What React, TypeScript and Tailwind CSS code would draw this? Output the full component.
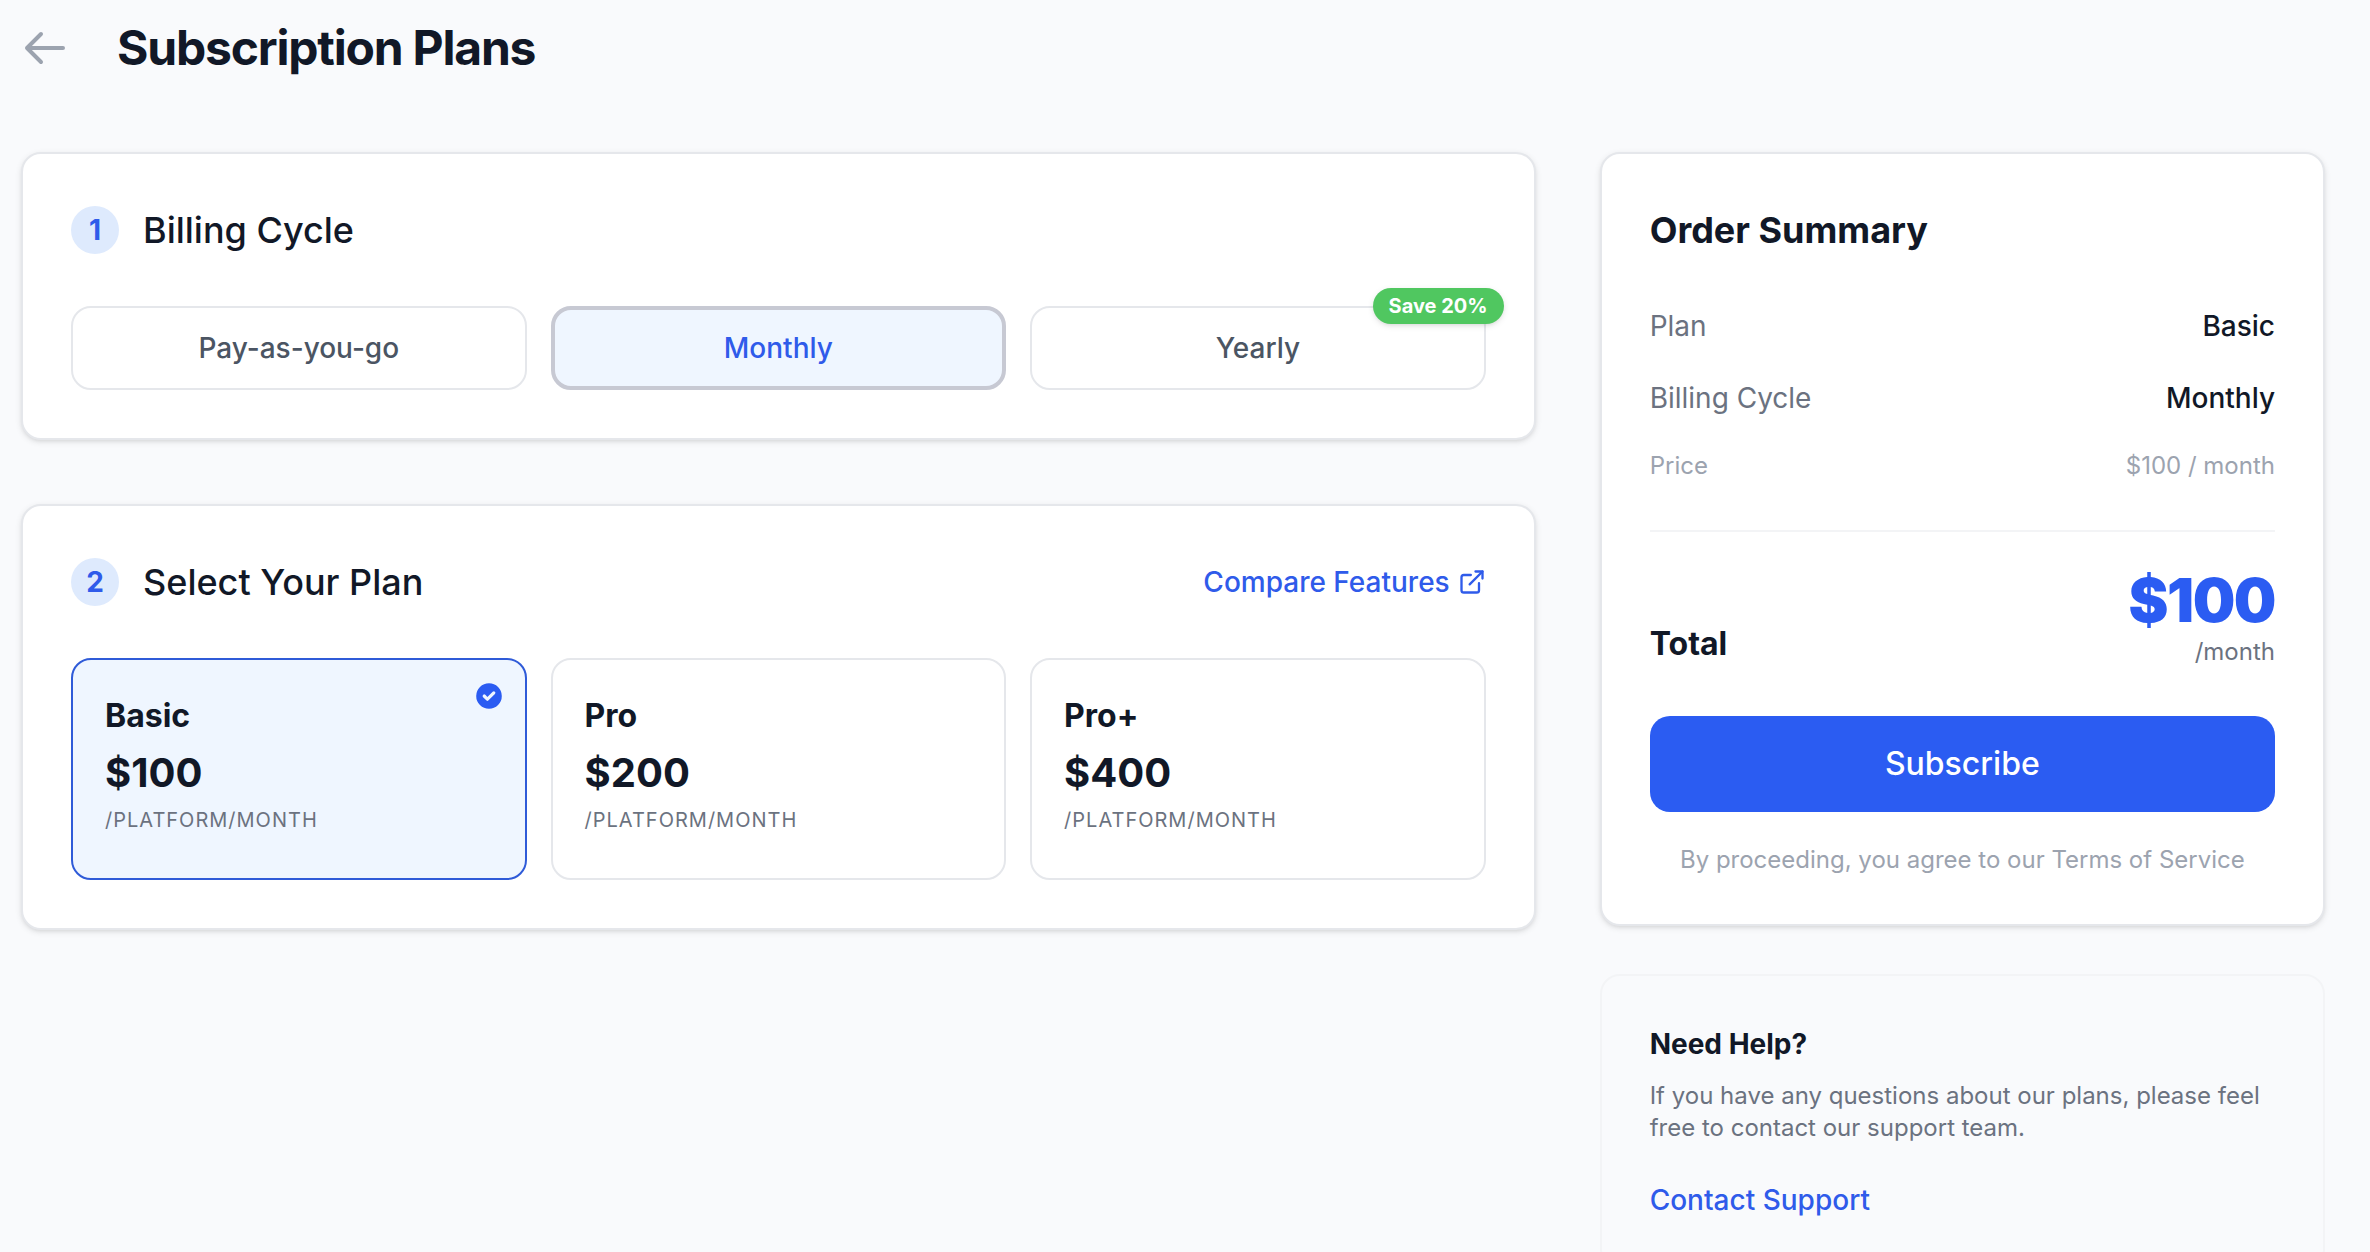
import { useState } from 'react';
import { ExternalLink } from 'lucide-react';
import { HiCheckCircle, HiOutlineArrowLeft } from 'react-icons/hi';
import clsx from 'clsx';

type Cycle = 'payg' | 'monthly' | 'yearly';

interface Plan {
  id: string;
  name: string;
  price: number;
}

const cycles: { id: Cycle; label: string; badge?: string }[] = [
  { id: 'payg', label: 'Pay-as-you-go' },
  { id: 'monthly', label: 'Monthly' },
  { id: 'yearly', label: 'Yearly', badge: 'Save 20%' },
];

const plans: Plan[] = [
  { id: 'basic', name: 'Basic', price: 100 },
  { id: 'pro', name: 'Pro', price: 200 },
  { id: 'pro-plus', name: 'Pro+', price: 400 },
];

const cardClass =
  'rounded-[20px] border-2 border-[#e5e7eb] bg-white p-12 shadow-[0_2px_6px_rgba(0,0,0,0.1),0_2px_4px_-2px_rgba(0,0,0,0.1)]';

function StepTitle({ step, title }: { step: number; title: string }) {
  return (
    <div className="flex items-center gap-6">
      <span className="flex size-12 items-center justify-center rounded-full bg-[#deeafd] text-[28px] leading-10 font-bold text-[#2f5bea]">
        {step}
      </span>
      <h2 className="text-4xl leading-14 font-medium">{title}</h2>
    </div>
  );
}

export default function App() {
  const [cycle, setCycle] = useState<Cycle>('monthly');
  const [planId, setPlanId] = useState('basic');

  const plan = plans.find((p) => p.id === planId) ?? plans[0];
  const cycleLabel = cycles.find((c) => c.id === cycle)?.label;

  return (
    <div className="min-h-screen bg-[#f9fafc] pt-4 pr-[45px] pb-12 pl-[21px] font-['Inter',sans-serif] text-[#111827]">
      <header className="mb-[72px] flex items-center gap-12">
        <button type="button" aria-label="Back" className="text-[#9ca3af] hover:text-[#4b5563]">
          <HiOutlineArrowLeft className="size-12" />
        </button>
        <h1 className="text-5xl leading-16 font-bold tracking-tight">Subscription Plans</h1>
      </header>

      <div className="grid grid-cols-3 items-start gap-16">
        <main className="col-span-2 flex flex-col gap-16">
          {/* Billing cycle */}
          <section className={cardClass}>
            <StepTitle step={1} title="Billing Cycle" />
            <div className="mt-12 grid grid-cols-3 gap-6">
              {cycles.map((c) => (
                <button
                  key={c.id}
                  type="button"
                  aria-pressed={cycle === c.id}
                  onClick={() => setCycle(c.id)}
                  className={clsx(
                    'relative h-[84px] rounded-[20px] text-[28px] leading-10 font-medium',
                    cycle === c.id
                      ? 'border-4 border-[#c7c9d3] bg-[#eff6ff] text-[#2f5bea]'
                      : 'border-2 border-[#e5e7eb] bg-white text-[#4b5563]',
                  )}
                >
                  {c.label}
                  {c.badge && (
                    <span className="absolute -top-5 -right-5 rounded-full bg-[#50c760] px-4 py-1 text-xl leading-7 font-bold text-white shadow-[0_2px_6px_rgba(0,0,0,0.1),0_2px_4px_-2px_rgba(0,0,0,0.1)]">
                      {c.badge}
                    </span>
                  )}
                </button>
              ))}
            </div>
          </section>

          {/* Plans */}
          <section className={cardClass}>
            <div className="flex items-center justify-between">
              <StepTitle step={2} title="Select Your Plan" />
              <a href="#compare" className="flex items-center gap-2 text-[28px] leading-10 font-medium text-[#2f5bea]">
                Compare Features
                <ExternalLink className="size-7" />
              </a>
            </div>
            <div className="mt-12 grid grid-cols-3 gap-6">
              {plans.map((p) => (
                <button
                  key={p.id}
                  type="button"
                  aria-pressed={planId === p.id}
                  onClick={() => setPlanId(p.id)}
                  className={clsx(
                    'relative flex flex-col items-start gap-[5px] rounded-[20px] border-2 px-8 pt-8 pb-11 text-left',
                    planId === p.id ? 'border-[#2f5bd8] bg-[#eff6ff]' : 'border-[#e5e7eb] bg-white',
                  )}
                >
                  <span className="text-[32px] leading-12 font-bold">{p.name}</span>
                  <span className="text-[40px] leading-14 font-bold">${p.price}</span>
                  <span className="text-xl leading-7 tracking-wider text-[#6b7280] uppercase">/platform/month</span>
                  {planId === p.id && <HiCheckCircle className="absolute top-5 right-5 size-8 text-[#2b5cf2]" />}
                </button>
              ))}
            </div>
          </section>
        </main>

        <aside className="flex flex-col gap-12">
          <section className={cardClass}>
            <h2 className="mb-12 text-4xl leading-14 font-bold">Order Summary</h2>
            <dl className="flex flex-col gap-8 border-b-2 border-[#f3f4f6] pb-12 text-[28px] leading-10">
              <div className="flex justify-between">
                <dt className="text-[#6b7280]">Plan</dt>
                <dd className="font-medium">{plan.name}</dd>
              </div>
              <div className="flex justify-between">
                <dt className="text-[#6b7280]">Billing Cycle</dt>
                <dd className="font-medium">{cycleLabel}</dd>
              </div>
              <div className="flex justify-between text-2xl leading-8 text-[#9ca3af]">
                <dt>Price</dt>
                <dd>${plan.price} / month</dd>
              </div>
            </dl>

            <div className="mt-8 flex items-end justify-between">
              <span className="text-[32px] leading-12 font-bold">Total</span>
              <div className="text-right">
                <div className="text-6xl leading-18 font-black tracking-tight text-[#2b5cf2]">${plan.price}</div>
                <div className="text-2xl leading-8 text-[#6b7280]">/month</div>
              </div>
            </div>

            <button type="button" className="mt-12 h-24 w-full rounded-[20px] bg-[#2b5cf2] text-[32px] leading-12 font-medium text-white">
              Subscribe
            </button>
            <p className="mt-8 text-center text-2xl leading-8 text-[#9ca3af]">
              By proceeding, you agree to our Terms of Service
            </p>
          </section>

          <section className="rounded-[20px] border-2 border-[#f3f4f6] p-12">
            <h3 className="mb-4 text-[28px] leading-10 font-bold">Need Help?</h3>
            <p className="mb-9 text-2xl leading-8 text-[#6b7280]">
              If you have any questions about our plans, please feel free to contact our support team.
            </p>
            <a href="#support" className="block text-[28px] leading-10 font-medium text-[#2f5bea]">
              Contact Support
            </a>
          </section>
        </aside>
      </div>
    </div>
  );
}
